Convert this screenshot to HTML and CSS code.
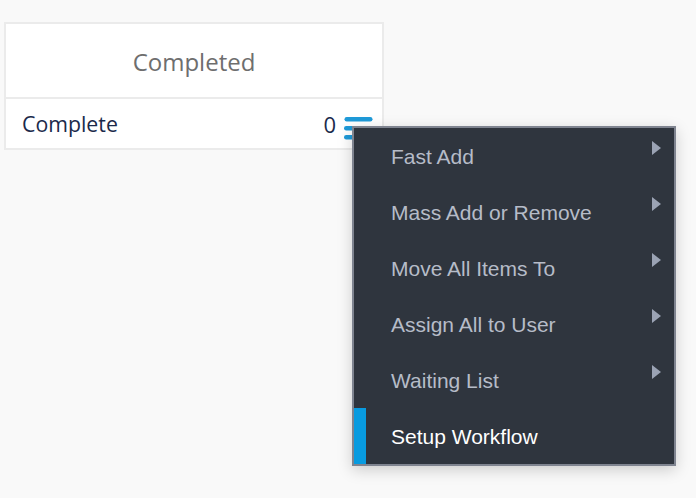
FILE: index.html
```html
<!DOCTYPE html>
<html>
<head>
<meta charset="utf-8">
<link rel="stylesheet" href="styles.css">
</head>
<body>
<div class="card">
  <div class="card-head">Completed</div>
  <div class="card-row">
    <span class="row-label">Complete</span>
    <span class="row-right">
      <span class="count">0</span>
      <svg class="burger" width="29" height="24" viewBox="0 0 29 24">
        <rect x="0.5" y="0" width="28" height="4.5" rx="2.2" fill="#1f9ad8"/>
        <rect x="0" y="9" width="28.5" height="4.5" rx="2.2" fill="#1f9ad8"/>
        <rect x="0" y="18" width="28.5" height="4.5" rx="2.2" fill="#1f9ad8"/>
      </svg>
    </span>
  </div>
</div>

<div class="menu">
  <div class="item"><span>Fast Add</span><i class="arrow"></i></div>
  <div class="item"><span>Mass Add or Remove</span><i class="arrow"></i></div>
  <div class="item"><span>Move All Items To</span><i class="arrow"></i></div>
  <div class="item"><span>Assign All to User</span><i class="arrow"></i></div>
  <div class="item"><span>Waiting List</span><i class="arrow"></i></div>
  <div class="item active"><span>Setup Workflow</span></div>
</div>
</body>
</html>
```
FILE: styles.css
```css
html, body {
  margin: 0;
  padding: 0;
  background: #f9f9f9;
  width: 696px;
  height: 498px;
  overflow: hidden;
}
body {
  font-family: "Open Sans", "Liberation Sans", sans-serif;
}
.card {
  margin: 22px 0 0 4px;
  width: 376px;
  border: 2px solid #ebebeb;
  background: #ffffff;
}
.card-head {
  height: 75px;
  border-bottom: 2px solid #ebebeb;
  display: flex;
  align-items: center;
  justify-content: center;
  color: #6e6e6e;
  font-size: 24px;
  padding-top: 2px;
  box-sizing: border-box;
}
.card-row {
  height: 49px;
  display: flex;
  align-items: center;
  justify-content: space-between;
  padding: 0 9px 0 16px;
}
.row-label {
  color: #1b2a4b;
  font-size: 21.3px;
}
.row-right {
  display: flex;
  align-items: center;
  gap: 8px;
}
.count {
  color: #1b2a4b;
  font-size: 22px;
}
.burger {
  display: block;
  margin-top: 10px;
}
.menu {
  position: absolute;
  left: 352px;
  top: 126px;
  width: 320px;
  border: 2px solid #7f8490;
  background: #2f353e;
  box-shadow: 0 4px 14px rgba(0,0,0,0.18);
  font-family: "Liberation Sans", Arial, sans-serif;
}
.item {
  height: 56px;
  display: flex;
  align-items: center;
  justify-content: space-between;
  padding: 0 13px 0 37px;
  color: #b6bcc8;
  font-size: 21px;
  position: relative;
}
.item span {
  margin-top: 1px;
}
.item.active {
  color: #ffffff;
}
.item.active::before {
  content: "";
  position: absolute;
  left: 0;
  top: 0;
  bottom: 0;
  width: 12px;
  background: #089be0;
}
.arrow {
  width: 0;
  height: 0;
  border-top: 7px solid transparent;
  border-bottom: 7px solid transparent;
  border-left: 9px solid #9ba3b4;
  margin-top: -16px;
}
```
